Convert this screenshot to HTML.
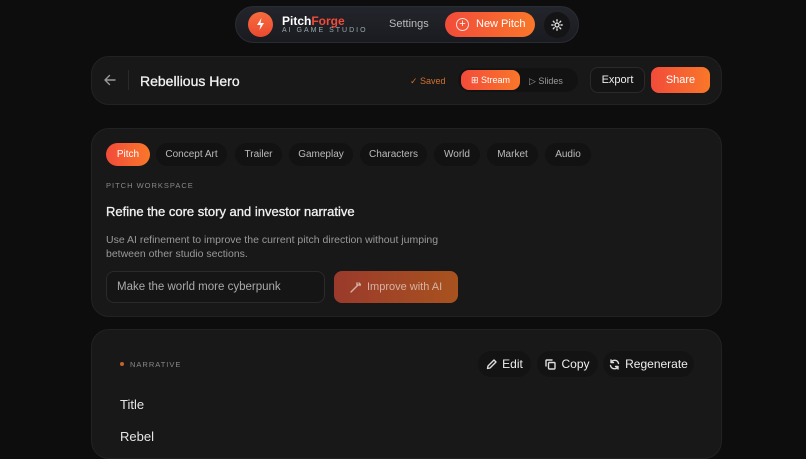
<!DOCTYPE html>
<html><head><meta charset="utf-8"><style>
*{box-sizing:border-box;margin:0;padding:0}
body{width:806px;height:444px;overflow:hidden;background:#0d0d0d;font-family:"Liberation Sans",sans-serif;color:#eee;position:relative}
.abs{position:absolute}
.nav{left:235px;top:6px;width:344px;height:37px;border-radius:19px;background:linear-gradient(#23252c,#1a1b20);border:1px solid #2a2c33}
.card{background:#181818;border:1px solid #222;border-radius:18px}
.pill{position:absolute;height:23px;border-radius:12px;background:#121212;color:#bbb;font-size:10px;line-height:23px;text-align:center}
.org{background:linear-gradient(90deg,#f24b3a,#f9772a);color:#fff}
.btn{position:absolute;border-radius:13px;background:#131313;color:#eee;font-size:12px;display:flex;align-items:center;justify-content:center;gap:5px;height:26px}
svg.i{fill:none;stroke:#ddd;stroke-width:1.4;stroke-linecap:round;stroke-linejoin:round}
</style></head><body>
<div class="abs nav"></div>
<div class="abs" style="left:248px;top:12px;width:25px;height:25px;border-radius:50%;background:linear-gradient(#f86c3e,#ea4a30)"></div>
<svg class="abs" style="left:254px;top:17px" width="13" height="14" viewBox="0 0 13 14"><path d="M7.5 1 L3 8 H6.5 L5.5 13 L10 6 H6.5 Z" fill="#fff"/></svg>
<div class="abs" style="left:282px;top:14px;font-size:12px;font-weight:bold;color:#fff">Pitch<span style="color:#f24b3a">Forge</span></div>
<div class="abs" style="left:282px;top:27px;font-size:7px;letter-spacing:2px;color:#9aa">AI GAME STUDIO</div>
<div class="abs" style="left:389px;top:18px;font-size:11px;color:#bbb">Settings</div>
<div class="abs org" style="left:445px;top:12px;width:90px;height:25px;border-radius:13px"></div>
<div class="abs" style="left:456px;top:18px;width:13px;height:13px;border-radius:50%;border:1px solid #fdd;font-size:11px;line-height:11px;text-align:center;color:#fff">+</div>
<div class="abs" style="left:476px;top:18px;font-size:11px;color:#fff">New Pitch</div>
<div class="abs" style="left:544px;top:12px;width:26px;height:26px;border-radius:50%;background:#141416"></div>
<svg class="abs i" style="left:551px;top:19px" width="12" height="12" viewBox="0 0 12 12"><circle cx="6" cy="6" r="2"/><path d="M6 .8v1.2M6 10v1.2M.8 6H2M10 6h1.2M2.3 2.3l.9.9M8.8 8.8l.9.9M2.3 9.7l.9-.9M8.8 3.2l.9-.9"/></svg>

<div class="abs card" style="left:91px;top:56px;width:631px;height:49px"></div>
<svg class="abs i" style="left:104px;top:74px" width="12" height="12" viewBox="0 0 12 12" style="stroke:#888"><path d="M11 6H1M5.5 1.5L1 6l4.5 4.5" stroke="#999"/></svg>
<div class="abs" style="left:128px;top:70px;width:1px;height:20px;background:#2a2a2a"></div>
<div class="abs" style="left:140px;top:73px;font-size:14px;color:#f2f2f2;-webkit-text-stroke:.3px #f2f2f2">Rebellious Hero</div>
<div class="abs" style="left:410px;top:76px;font-size:9px;color:#d0712e">✓ Saved</div>
<div class="abs" style="left:458px;top:68px;width:120px;height:24px;border-radius:12px;background:#121212"></div>
<div class="abs org" style="left:461px;top:70px;width:59px;height:20px;border-radius:8px;font-size:9px;line-height:20px;text-align:center">⊞ Stream</div>
<div class="abs" style="left:529px;top:76px;font-size:9px;color:#999">▷ Slides</div>
<div class="abs" style="left:590px;top:67px;width:55px;height:26px;border-radius:8px;border:1px solid #2a2a2a;background:#141414;font-size:11px;line-height:25px;text-align:center">Export</div>
<div class="abs org" style="left:651px;top:67px;width:59px;height:26px;border-radius:8px;font-size:11px;line-height:27px;text-align:center">Share</div>

<div class="abs card" style="left:91px;top:128px;width:631px;height:189px"></div>
<div class="pill org" style="left:106px;top:143px;width:44px;line-height:24px">Pitch</div>
<div class="pill" style="left:156px;top:143px;width:71px;line-height:24px">Concept Art</div>
<div class="pill" style="left:235px;top:143px;width:47px;line-height:24px">Trailer</div>
<div class="pill" style="left:289px;top:143px;width:64px;line-height:24px">Gameplay</div>
<div class="pill" style="left:360px;top:143px;width:67px;line-height:24px">Characters</div>
<div class="pill" style="left:434px;top:143px;width:46px;line-height:24px">World</div>
<div class="pill" style="left:487px;top:143px;width:51px;line-height:24px">Market</div>
<div class="pill" style="left:545px;top:143px;width:46px;line-height:24px">Audio</div>
<div class="abs" style="left:106px;top:181px;font-size:7.5px;letter-spacing:1px;color:#888">PITCH WORKSPACE</div>
<div class="abs" style="left:106px;top:204px;font-size:13px;color:#f2f2f2;-webkit-text-stroke:.3px #f2f2f2">Refine the core story and investor narrative</div>
<div class="abs" style="left:106px;top:233px;font-size:10.5px;line-height:14px;color:#999;width:350px">Use AI refinement to improve the current pitch direction without jumping between other studio sections.</div>
<div class="abs" style="left:106px;top:271px;width:219px;height:32px;border-radius:8px;border:1px solid #2a2a2a;background:#151515;font-size:11.5px;line-height:31px;padding-left:10px;color:#aaa">Make the world more cyberpunk</div>
<div class="abs" style="left:334px;top:271px;width:124px;height:32px;border-radius:8px;background:linear-gradient(90deg,#9a3a2c,#a8521f);font-size:11px;line-height:33px;padding-left:33px;color:#d6b3a5">Improve with AI</div>
<svg class="abs i" style="left:350px;top:282px" width="11" height="11" viewBox="0 0 11 11"><path d="M1 10L8 3M7 1v2M9 3h2M9 1l1 1" stroke="#d6b3a5"/></svg>

<div class="abs card" style="left:91px;top:329px;width:631px;height:130px"></div>
<div class="abs" style="left:120px;top:362px;width:4px;height:4px;border-radius:50%;background:#c0642e"></div>
<div class="abs" style="left:130px;top:360px;font-size:7.5px;letter-spacing:1px;color:#888">NARRATIVE</div>
<div class="btn" style="left:478px;top:351px;width:53px"><svg class="i" width="11" height="11" viewBox="0 0 11 11"><path d="M1.5 9.5l.5-2.5 6-6 2 2-6 6z"/></svg>Edit</div>
<div class="btn" style="left:537px;top:351px;width:61px"><svg class="i" width="11" height="11" viewBox="0 0 11 11"><rect x="3.5" y="3.5" width="6.5" height="6.5" rx="1"/><path d="M1 7V1.8Q1 1 1.8 1H7"/></svg>Copy</div>
<div class="btn" style="left:603px;top:351px;width:91px"><svg class="i" width="11" height="11" viewBox="0 0 11 11"><path d="M9.5 4.5A4 4 0 0 0 2 3.5M1.5 6.5A4 4 0 0 0 9 7.5M2 1v2.5h2.5M9 10V7.5H6.5"/></svg>Regenerate</div>
<div class="abs" style="left:120px;top:397px;font-size:13px;color:#e6e6e6">Title</div>
<div class="abs" style="left:120px;top:429px;font-size:13px;color:#e6e6e6">Rebel</div>
</body></html>
